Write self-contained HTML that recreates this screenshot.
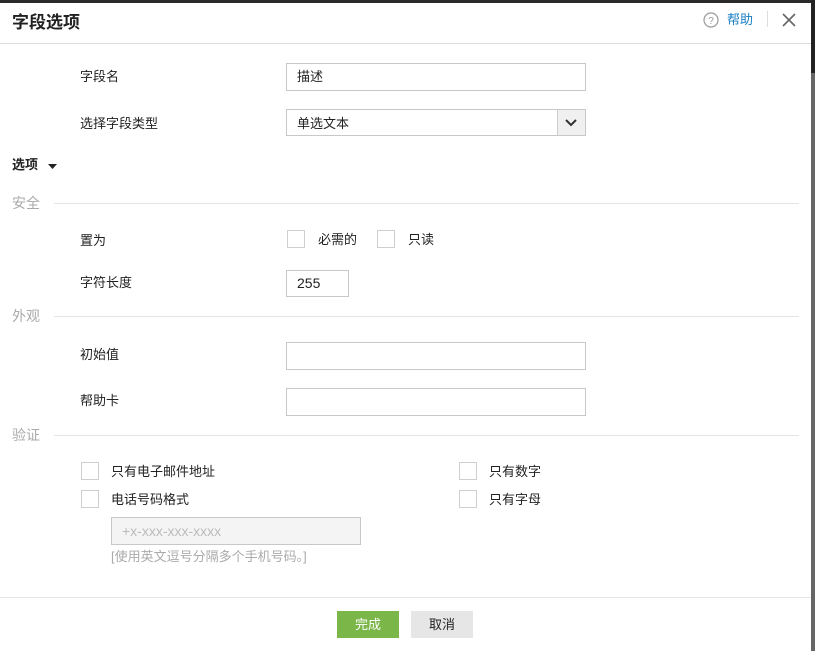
<!DOCTYPE html>
<html><head><meta charset="utf-8"><style>
*{margin:0;padding:0;box-sizing:border-box}
body{width:815px;height:651px;position:relative;overflow:hidden;background:#fff;font-family:"Liberation Sans","Noto Sans CJK SC",sans-serif;font-size:13px;color:#222}
.a{position:absolute;white-space:nowrap}
.t{line-height:16px}
.in{position:absolute;border:1px solid #c8c8c8;background:#fff}
.cb{position:absolute;width:18px;height:18px;border:1px solid #cfcfcf;background:#fff}
.sec{position:absolute;left:12px;color:#aaa;font-size:14px;line-height:16px}
.ln{position:absolute;left:54px;width:745px;height:1px;background:#e4e4e4}
</style></head><body>
<div class="a" style="left:0;top:0;width:815px;height:3px;background:#2a2a2a"></div>
<div class="a" style="left:811px;top:0;width:4px;height:73px;background:#222"></div>
<div class="a" style="left:811px;top:73px;width:4px;height:578px;background:#666"></div>

<div class="a" style="left:12px;top:13px;font-size:17px;font-weight:bold;line-height:20px">字段选项</div>
<svg class="a" style="left:703px;top:12px" width="16" height="16" viewBox="0 0 16 16"><circle cx="8" cy="8" r="7" fill="none" stroke="#999" stroke-width="1.2"/><text x="8" y="12" font-size="10" text-anchor="middle" fill="#999" font-family="Liberation Sans">?</text></svg>
<div class="a t" style="left:727px;top:12px;color:#1a7fc4">帮助</div>
<div class="a" style="left:767px;top:11px;width:1px;height:16px;background:#ddd"></div>
<svg class="a" style="left:782px;top:13px" width="14" height="14" viewBox="0 0 14 14"><path d="M1 1L13 13M13 1L1 13" stroke="#666" stroke-width="1.6"/></svg>
<div class="a" style="left:0;top:43px;width:811px;height:1px;background:#ddd"></div>

<div class="a t" style="left:80px;top:69px">字段名</div>
<div class="in" style="left:286px;top:63px;width:300px;height:28px"></div>
<div class="a t" style="left:297px;top:69px">描述</div>
<div class="a t" style="left:80px;top:116px">选择字段类型</div>
<div class="in" style="left:286px;top:109px;width:300px;height:27px"></div>
<div class="a" style="left:557px;top:110px;width:28px;height:25px;background:#f0f0f0;border-left:1px solid #ccc"></div>
<svg class="a" style="left:565px;top:118px" width="12" height="10" viewBox="0 0 12 10"><path d="M1 2L6 7L11 2" fill="none" stroke="#333" stroke-width="2"/></svg>
<div class="a t" style="left:297px;top:116px">单选文本</div>

<div class="a t" style="left:12px;top:157px;font-weight:bold">选项</div>
<svg class="a" style="left:48px;top:164px" width="10" height="6"><path d="M0 0H9L4.5 5Z" fill="#222"/></svg>

<div class="sec" style="top:195px">安全</div><div class="ln" style="top:203px"></div>
<div class="a t" style="left:80px;top:233px">置为</div>
<div class="cb" style="left:287px;top:230px"></div>
<div class="a t" style="left:318px;top:232px">必需的</div>
<div class="cb" style="left:377px;top:230px"></div>
<div class="a t" style="left:408px;top:232px">只读</div>
<div class="a t" style="left:80px;top:275px">字符长度</div>
<div class="in" style="left:286px;top:270px;width:63px;height:27px"></div>
<div class="a t" style="left:297px;top:275px;font-size:14px">255</div>

<div class="sec" style="top:308px">外观</div><div class="ln" style="top:316px"></div>
<div class="a t" style="left:80px;top:347px">初始值</div>
<div class="in" style="left:286px;top:342px;width:300px;height:28px"></div>
<div class="a t" style="left:80px;top:393px">帮助卡</div>
<div class="in" style="left:286px;top:388px;width:300px;height:28px"></div>

<div class="sec" style="top:427px">验证</div><div class="ln" style="top:435px"></div>
<div class="cb" style="left:81px;top:462px"></div>
<div class="a t" style="left:111px;top:464px">只有电子邮件地址</div>
<div class="cb" style="left:459px;top:462px"></div>
<div class="a t" style="left:489px;top:464px">只有数字</div>
<div class="cb" style="left:81px;top:490px"></div>
<div class="a t" style="left:111px;top:492px">电话号码格式</div>
<div class="cb" style="left:459px;top:490px"></div>
<div class="a t" style="left:489px;top:492px">只有字母</div>
<div class="in" style="left:111px;top:517px;width:250px;height:28px;background:#f4f4f4"></div>
<div class="a t" style="left:122px;top:523px;color:#bbb;font-size:14px">+x-xxx-xxx-xxxx</div>
<div class="a t" style="left:111px;top:549px;color:#aaa">[使用英文逗号分隔多个手机号码。]</div>

<div class="a" style="left:0;top:597px;width:811px;height:1px;background:#e4e4e4"></div>
<div class="a" style="left:337px;top:611px;width:62px;height:27px;background:#7ab648;color:#fff;text-align:center;line-height:27px">完成</div>
<div class="a" style="left:411px;top:611px;width:62px;height:27px;background:#e6e6e6;color:#222;text-align:center;line-height:27px">取消</div>
</body></html>
